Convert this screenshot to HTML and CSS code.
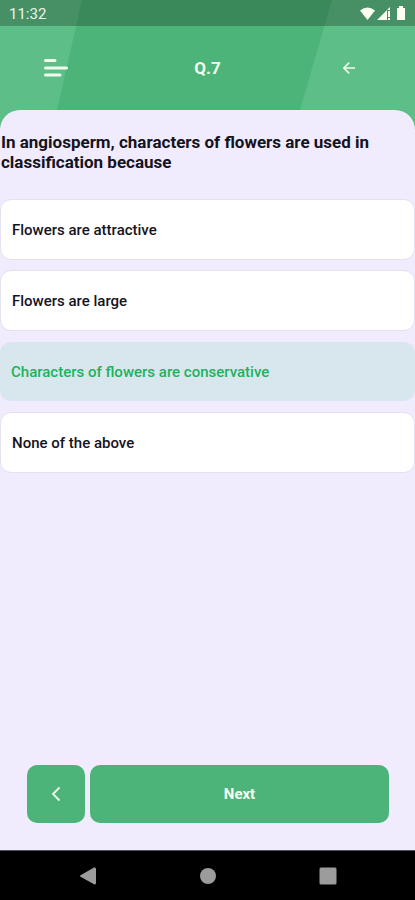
FILE: index.html
```html
<!DOCTYPE html>
<html lang="en">
<head>
<meta charset="utf-8">
<meta name="viewport" content="width=device-width, initial-scale=1">
<title>Quiz</title>
<link rel="stylesheet" href="styles.css">
</head>
<body>
<div class="app">
  <svg class="backdrop" viewBox="0 0 415 140" preserveAspectRatio="none" aria-hidden="true">
    <path d="M0 0H82L57 110L50 140H0Z"/>
    <path d="M332 0H415V140H291L300 110Z"/>
  </svg>
  <div class="status">
    <span>11:32</span>
    <svg width="47" height="16" viewBox="0 0 47 16" fill="#fffff4" aria-hidden="true">
      <path d="M0 4.500Q7.500-1.500 15 4.500L7.500 14Z"/>
      <path d="M17 14L30 1V4H27V14Z"/>
      <path d="M28 5H30V11H28ZM28 12H30V14H28Z"/>
      <path d="M37 2H39V0H43V2H45V14H37Z"/>
    </svg>
  </div>
  <header class="header">
    <button class="icon-button menu" aria-label="Menu">
      <svg width="24" height="18" viewBox="0 0 24 18" fill="none" stroke="#effcec" stroke-width="3" stroke-linecap="round" aria-hidden="true"><path d="M1.500 1.500H11M1.500 9H22.500M1.500 16H16"/></svg>
    </button>
    <h1 class="title">Q.7</h1>
    <button class="icon-button back" aria-label="Back">
      <svg width="12" height="12" viewBox="0 0 12 12" fill="none" stroke="#effcec" stroke-width="1.600" aria-hidden="true"><path d="M6.200 .6L.9 6L6.200 11.400M1 6H12"/></svg>
    </button>
  </header>
  <main class="panel">
    <h2 class="question">In angiosperm, characters of flowers are used in classification because</h2>
    <div class="options">
      <button class="option">Flowers are attractive</button>
      <button class="option">Flowers are large</button>
      <button class="option selected" aria-pressed="true">Characters of flowers are conservative</button>
      <button class="option">None of the above</button>
    </div>
    <div class="actions">
      <button class="action previous" aria-label="Previous">
        <svg width="10" height="16" viewBox="0 0 10 16" fill="none" stroke="#f4fff0" stroke-width="1.800" aria-hidden="true"><path d="M8.500 1.500L2 8L8.500 14.500"/></svg>
      </button>
      <button class="action next">Next</button>
    </div>
  </main>
  <nav class="system">
    <button class="system-button" aria-label="System back"><svg width="18" height="18" viewBox="0 0 18 18" aria-hidden="true"><path d="M1.500 8.200L15 .6Q17 0 17 2V16Q17 18 15 17.200L1.500 9.800Q0 9 1.500 8.200Z"/></svg></button>
    <button class="system-button" aria-label="Home"><svg width="18" height="18" viewBox="0 0 18 18" aria-hidden="true"><circle cx="9" cy="9" r="8"/></svg></button>
    <button class="system-button" aria-label="Recent apps"><svg width="18" height="18" viewBox="0 0 18 18" aria-hidden="true"><rect x=".5" y=".5" width="17" height="17" rx="1.500"/></svg></button>
  </nav>
</div>
</body>
</html>
```
FILE: styles.css
```css
* {
  box-sizing: border-box;
}

body {
  margin: 0;
  font-family: Roboto, sans-serif;
  color: #15131d;
}

button {
  border: 0;
  padding: 0;
  background: none;
  font: inherit;
  color: inherit;
}

svg {
  display: block;
}

.app {
  position: relative;
  display: flex;
  flex-direction: column;
  min-height: 100vh;
  background: #4cb478;
}

.backdrop {
  position: absolute;
  top: 0;
  left: 0;
  width: 100%;
  height: 140px;
  fill: #5ebe87;
}

.status {
  position: relative;
  display: flex;
  align-items: center;
  justify-content: space-between;
  height: 26px;
  padding: 2px 8px 0 9px;
  background: rgba(0, 0, 0, 0.24);
  color: #e8f5e6;
  font-size: 15px;
}

.header {
  position: relative;
  display: grid;
  grid-template-columns: 1fr 1fr 1fr;
  align-items: center;
  justify-items: center;
  height: 84px;
}

.icon-button {
  display: grid;
  place-items: center;
  width: 48px;
  height: 48px;
}

.menu {
  justify-self: start;
  margin-left: 32px;
}

.back {
  justify-self: end;
  margin-right: 42px;
}

.title {
  margin: 0;
  color: #f4fff0;
  font-size: 17px;
  font-weight: 700;
}

.panel {
  position: relative;
  display: flex;
  flex: 1;
  flex-direction: column;
  padding-top: 22px;
  border-radius: 20px 20px 0 0;
  background: #f0ecfe;
}

.question {
  margin: 0;
  padding: 0 1px;
  font-size: 17px;
  line-height: 20px;
  font-weight: 700;
}

.options {
  display: grid;
  gap: 10px;
  margin-top: 27px;
}

.option {
  height: 61px;
  padding: 0 11px;
  border: 1px solid #e4e0ee;
  border-radius: 11px;
  background: #fff;
  font-size: 15px;
  font-weight: 500;
  text-align: left;
}

.option.selected {
  border-color: transparent;
  border-width: 1px 0;
  background: #d8e7ee;
  background-clip: padding-box;
  color: #1bb35c;
}

.actions {
  display: flex;
  gap: 5px;
  margin-top: auto;
  padding: 26px 26px 27px 27px;
}

.action {
  display: grid;
  place-items: center;
  height: 58px;
  border-radius: 10px;
  background: #4cb478;
  color: #f4fff0;
  font-size: 15px;
  font-weight: 700;
}

.previous {
  width: 58px;
}

.next {
  flex: 1;
}

.system {
  position: relative;
  display: flex;
  align-items: center;
  justify-content: center;
  gap: 72px;
  height: 50px;
  border-top: 1px solid #55535c;
  background: #000;
}

.system-button {
  display: grid;
  place-items: center;
  width: 48px;
  height: 48px;
  fill: #9c9c9c;
}
```
